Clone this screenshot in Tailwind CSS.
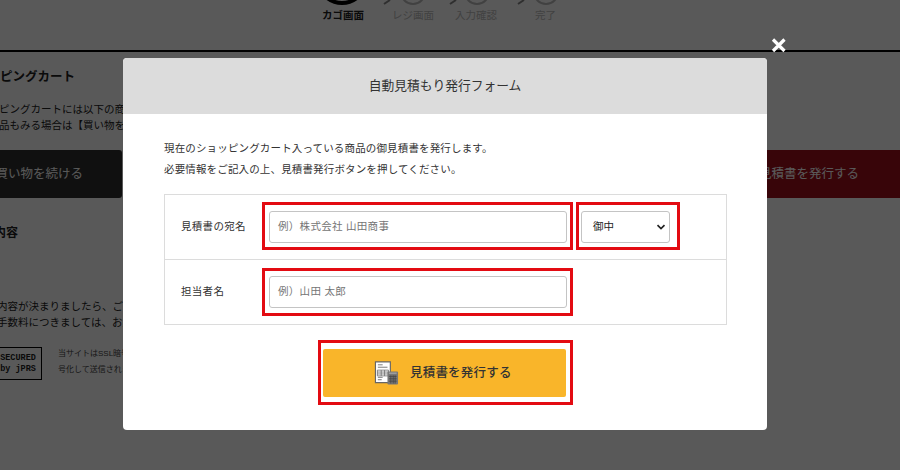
<!DOCTYPE html>
<html lang="ja">
<head>
<meta charset="utf-8">
<script src="https://cdn.jsdelivr.net/npm/@tailwindcss/browser@4"></script>
</head>
<body class="m-0 overflow-hidden bg-white font-['Liberation_Sans','Noto_Sans_CJK_JP',sans-serif]">
<div class="relative h-[470px] w-[900px] overflow-hidden">
  <!-- page behind the overlay -->
  <div class="h-[470px] w-[900px] bg-white text-[#222]">
    <div class="relative h-[50px]">
      <div class="absolute left-[316px] top-[-47px] h-[52px] w-[52px] rounded-full border-[4px] border-black"></div>
      <div class="absolute left-[400px] top-[-21px] h-[26px] w-[26px] rounded-full border-2 border-[#bbb]"></div>
      <div class="absolute left-[464px] top-[-21px] h-[26px] w-[26px] rounded-full border-2 border-[#bbb]"></div>
      <div class="absolute left-[533px] top-[-21px] h-[26px] w-[26px] rounded-full border-2 border-[#bbb]"></div>
      <svg class="absolute left-[383px] top-0" width="8" height="5"><path d="M1 4 L7 0" fill="none" stroke="#888" stroke-width="2"/></svg>
      <svg class="absolute left-[449px] top-0" width="8" height="5"><path d="M1 4 L7 0" fill="none" stroke="#888" stroke-width="2"/></svg>
      <svg class="absolute left-[517px] top-0" width="8" height="5"><path d="M1 4 L7 0" fill="none" stroke="#888" stroke-width="2"/></svg>
      <span class="absolute left-[322px] top-[8px] text-[10.5px] font-bold leading-[15px]">カゴ画面</span>
      <span class="absolute left-[392px] top-[8px] text-[10.5px] leading-[15px] text-[#bbb]">レジ画面</span>
      <span class="absolute left-[455px] top-[8px] text-[10.5px] leading-[15px] text-[#bbb]">入力確認</span>
      <span class="absolute left-[535px] top-[8px] text-[10.5px] leading-[15px] text-[#bbb]">完了</span>
    </div>
    <div class="h-[2px] bg-black"></div>
    <div class="relative">
      <p class="absolute left-0 top-[15px] whitespace-nowrap text-[12.5px] font-bold leading-[20px]">ピングカート</p>
      <p class="absolute left-[-1px] top-[49px] whitespace-nowrap text-[10.5px] leading-[16px]">ピングカートには以下の商品が入っています。</p>
      <p class="absolute left-[-1px] top-[65px] whitespace-nowrap text-[10.5px] leading-[16px]">品もみる場合は【買い物を続ける】</p>
      <div class="absolute left-[-20px] top-[98px] flex h-[48px] w-[142px] items-center justify-end rounded-[3px] bg-[#2e2e2e] pr-[39px] text-[12.5px] text-white">買い物を続ける</div>
      <div class="absolute left-[600px] top-[98px] flex h-[48px] w-[300px] items-center bg-[#a0101c] pl-[159px] text-[12.5px] text-white">見積書を発行する</div>
      <p class="absolute left-[-6px] top-[172px] text-[12px] font-bold leading-[18px]">内容</p>
      <p class="absolute left-[-3px] top-[246px] whitespace-nowrap text-[10.5px] leading-[16px]">内容が決まりましたら、ご購入手続きへ</p>
      <p class="absolute left-[-3px] top-[262px] whitespace-nowrap text-[10.5px] leading-[16px]">手数料につきましては、お支払い方法</p>
      <div class="absolute left-[-6px] top-[295px] flex h-[33px] w-[48px] flex-col items-center justify-center border border-black font-['Liberation_Mono',monospace] text-[8.5px] font-bold leading-[11px]">
        <span>SECURED</span><span>by jPRS</span>
      </div>
      <p class="absolute left-[58px] top-[296px] whitespace-nowrap text-[8px] leading-[12px] text-[#444]">当サイトはSSL暗号化通信に</p>
      <p class="absolute left-[58px] top-[312px] whitespace-nowrap text-[8px] leading-[12px] text-[#444]">号化して送信されます。</p>
    </div>
  </div>

  <!-- overlay -->
  <div class="absolute inset-0 bg-black/65"></div>

  <!-- close -->
  <svg class="absolute left-[771px] top-[37px]" width="16" height="16" viewBox="0 0 16 16"><path d="M2 2.5 L13.5 14 M13.5 2.5 L2 14" stroke="#fff" stroke-width="3.2" fill="none"/></svg>

  <!-- modal -->
  <div class="absolute left-[123px] top-[58px] h-[372px] w-[644px] overflow-hidden rounded-[4px] bg-white">
    <div class="flex h-[56px] items-center justify-center bg-[#dcdcdc] text-[12.75px] leading-[20px] text-[#333]">自動見積もり発行フォーム</div>
    <div class="px-[41px] pt-[24px]">
      <p class="text-[10.5px] leading-[21px] tracking-[0.15px] text-[#333]">現在のショッピングカート入っている商品の御見積書を発行します。<br>必要情報をご記入の上、見積書発行ボタンを押してください。</p>
      <div class="mt-[14px] w-[563px] border border-[#dcdcdc]">
        <div class="flex h-[65px] items-start border-b border-[#dcdcdc]">
          <div class="flex h-[64px] w-[97px] shrink-0 items-center pl-[16px] text-[10.5px] tracking-[0.3px] text-[#333]">見積書の宛名</div>
          <div class="mt-[7px] box-border h-[48px] w-[311px] border-[3px] border-[#e30b12] pb-[4px] pl-[4px] pr-[3px] pt-[6px]">
            <div class="flex h-[32px] w-[298px] items-center rounded-[3px] border border-[#c4c4c4] pl-[8px] text-[10.5px] tracking-[0.3px] text-[#757575]">例）株式会社 山田商事</div>
          </div>
          <div class="ml-[3px] mt-[7px] box-border h-[48px] w-[104px] border-[3px] border-[#e30b12] pb-[4px] pl-[2px] pr-[7px] pt-[6px]">
            <div class="flex h-[32px] w-[89px] items-center justify-between rounded-[3px] border border-[#c4c4c4] pl-[11px] pr-[3px] text-[10.5px] text-[#222]">
              <span>御中</span>
              <svg width="10" height="6" viewBox="0 0 10 6"><path d="M1.5 1.2 L5 4.6 L8.5 1.2" fill="none" stroke="#222" stroke-width="1.7"/></svg>
            </div>
          </div>
        </div>
        <div class="flex h-[64px] items-start">
          <div class="flex h-[64px] w-[97px] shrink-0 items-center pl-[16px] text-[10.5px] tracking-[0.3px] text-[#333]">担当者名</div>
          <div class="mt-[8px] box-border h-[48px] w-[311px] border-[3px] border-[#e30b12] pb-[5px] pl-[4px] pr-[3px] pt-[5px]">
            <div class="flex h-[32px] w-[298px] items-center rounded-[3px] border border-[#c4c4c4] pl-[8px] text-[10.5px] tracking-[0.3px] text-[#757575]">例）山田 太郎</div>
          </div>
        </div>
      </div>
      <div class="mt-[15px] flex justify-start">
        <div class="ml-[154px] box-border h-[65px] w-[255px] border-[3px] border-[#e30b12] pb-[5px] pl-[2px] pr-[4px] pt-[6px]">
          <div class="flex h-[48px] w-[243px] items-center gap-[11px] rounded-[2px] bg-[#f9b52a] pl-[51px] text-[12.5px] font-medium tracking-[0.2px] text-[#333]">
            <svg width="25" height="26" viewBox="0 0 26 26">
              <path d="M1.5 1.5 H17 V23 H1.5 Z" fill="#fff" stroke="#666" stroke-width="1.2"/>
              <path d="M4 4.5 H9 M4 7 H14 M4 17.5 H9 M4 20 H8" stroke="#777" stroke-width="1"/>
              <path d="M3.5 10 H15 V16 H3.5 Z M3.5 12 H15 M3.5 14 H15 M7.5 10 V16 M11 10 V16" fill="none" stroke="#666" stroke-width="0.8"/>
              <rect x="14" y="11.5" width="11" height="13.5" rx="1" fill="#777"/>
              <path d="M15.5 13.2 H23.5" stroke="#aaa" stroke-width="1.2"/>
              <path d="M15.5 16.5 H23.5 M15.5 19 H23.5 M15.5 21.5 H23.5 M17.5 15.5 V24 M20 15.5 V24 M22 15.5 V24" stroke="#444" stroke-width="0.8"/>
            </svg>
            <span>見積書を発行する</span>
          </div>
        </div>
      </div>
    </div>
  </div>
</div>
</body>
</html>
